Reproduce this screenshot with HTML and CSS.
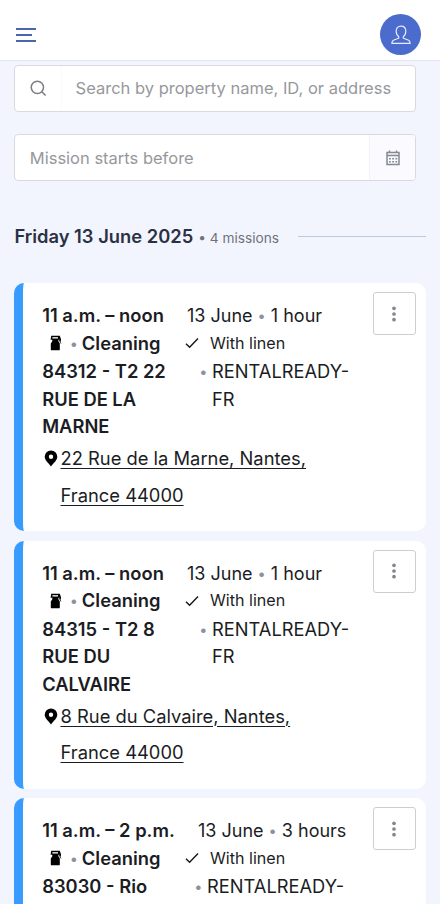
FILE: index.html
```html
<!DOCTYPE html>
<html lang="en">
<head>
<meta charset="utf-8">
<meta name="viewport" content="width=device-width, initial-scale=1">
<title>Missions</title>
<link rel="stylesheet" href="styles.css">
</head>
<body>
<svg class="sprite" aria-hidden="true">
  <symbol id="spray" viewBox="0 0 12 16">
    <path d="M1.200.8h8.600l1.200 3.400v3l-1.400-2.400H8.400v1.400l1.400 2.200v6c0 .6-.4.900-.9.900H1.700c-.5 0-.9-.3-.9-.9v-6l1.500-2.200V4.800H.6z"/>
    <path d="M2.400 2.200h5.600v1.300H2.400z" fill="#fff"/>
    <path d="M9 4.500l1.900 4" fill="none" stroke="#111" stroke-width=".8"/>
  </symbol>
  <symbol id="check" viewBox="0 0 14 12">
    <path d="M1 6.700l3.600 3.600L13 1.600" fill="none" stroke="#14161b" stroke-width="1.400"/>
  </symbol>
  <symbol id="pin" viewBox="0 0 14 17">
    <path fill-rule="evenodd" d="M7 .5A6.300 6.300 0 0 0 .7 6.800C.7 10.500 4.600 13 7 16.500c2.400-3.500 6.300-6 6.300-9.700A6.300 6.300 0 0 0 7 .5zM7 4.500a2.200 2.200 0 1 1 0 4.400 2.200 2.200 0 0 1 0-4.400z"/>
  </symbol>
  <symbol id="dots" viewBox="0 0 4 16">
    <circle cx="2" cy="2.300" r="1.850"/><circle cx="2" cy="8" r="1.850"/><circle cx="2" cy="13.700" r="1.850"/>
  </symbol>
</svg>

<header class="topbar">
  <svg class="menu" viewBox="0 0 20 14"><path d="M0 1h20M0 7h16M0 13h20"/></svg>
  <div class="avatar">
    <svg viewBox="0 0 20 20"><path d="M7.700 11.700C6 10.500 5.200 8.500 5.200 6.300c0-3.300 1.800-5.200 4.800-5.200s4.800 1.900 4.800 5.200c0 2.200-.8 4.200-2.500 5.400v1.500l5.300 2.100c1.100.5 1.500 1.300 1.500 3.100H.9c0-1.800.4-2.600 1.500-3.100l5.300-2.100z"/></svg>
  </div>
</header>

<main class="page">
  <div class="field search">
    <span class="search-icon"><svg viewBox="0 0 18 18"><circle cx="7.800" cy="7.800" r="6.500"/><path d="M12.500 12.500l4 4"/></svg></span>
    <span class="placeholder">Search by property name, ID, or address</span>
  </div>
  <div class="field date">
    <span class="placeholder">Mission starts before</span>
    <span class="date-icon"><svg viewBox="0 0 14 16"><path d="M1 2.500h12v12H1zM1 5.500h12M3.500.5v2M10.500.5v2"/><path class="grid-dots" d="M3 8.700h8.200M3 11.700h8.200"/></svg></span>
  </div>

  <div class="day">
    <h2>Friday 13 June 2025</h2>
    <span class="count">• 4 missions</span>
    <span class="rule"></span>
  </div>

  <article class="card">
    <div class="body">
      <div class="row"><b class="time">11 a.m. – noon</b><span class="when">13 June <i>•</i> 1 hour</span></div>
      <div class="row kind"><svg class="spray"><use href="#spray"/></svg><i>•</i><b class="type">Cleaning</b><svg class="check"><use href="#check"/></svg><span class="linen">With linen</span></div>
      <div class="row place"><b class="name">84312 - T2 22<br>RUE DE LA<br>MARNE</b><i>•</i><span class="owner">RENTALREADY-<br>FR</span></div>
      <div class="address"><svg class="pin"><use href="#pin"/></svg><a>22 Rue de la Marne, Nantes,<br>France 44000</a></div>
    </div>
    <div class="more"><svg><use href="#dots"/></svg></div>
  </article>

  <article class="card">
    <div class="body">
      <div class="row"><b class="time">11 a.m. – noon</b><span class="when">13 June <i>•</i> 1 hour</span></div>
      <div class="row kind"><svg class="spray"><use href="#spray"/></svg><i>•</i><b class="type">Cleaning</b><svg class="check"><use href="#check"/></svg><span class="linen">With linen</span></div>
      <div class="row place"><b class="name">84315 - T2 8<br>RUE DU<br>CALVAIRE</b><i>•</i><span class="owner">RENTALREADY-<br>FR</span></div>
      <div class="address"><svg class="pin"><use href="#pin"/></svg><a>8 Rue du Calvaire, Nantes,<br>France 44000</a></div>
    </div>
    <div class="more"><svg><use href="#dots"/></svg></div>
  </article>

  <article class="card cut">
    <div class="body">
      <div class="row"><b class="time long">11 a.m. – 2 p.m.</b><span class="when">13 June <i>•</i> 3 hours</span></div>
      <div class="row kind"><svg class="spray"><use href="#spray"/></svg><i>•</i><b class="type">Cleaning</b><svg class="check"><use href="#check"/></svg><span class="linen">With linen</span></div>
      <div class="row place narrow"><b class="name">83030 - Rio</b><i>•</i><span class="owner">RENTALREADY-</span></div>
    </div>
    <div class="more"><svg><use href="#dots"/></svg></div>
  </article>
</main>
</body>
</html>
```

FILE: styles.css
```css
* { box-sizing: border-box; }
body {
  margin: 0;
  height: 904px;
  overflow: hidden;
  background: #f2f5fe;
  color: #1b1d24;
  font-family: Inter, "Liberation Sans", sans-serif;
  font-size: 18px;
}
svg { display: block; flex: none; }
.sprite { display: none; }
i { font-style: normal; color: #8d919c; font-size: 14.5px; }
.when i { vertical-align: 1px; line-height: 1; }
b { font-weight: 600; font-size: 18.35px; }

.topbar {
  height: 61px;
  padding: 9px 19px 0 16px;
  display: flex;
  align-items: center;
  justify-content: space-between;
  background: #fff;
  border-bottom: 1px solid #e1e4ea;
}
.menu { width: 20px; height: 14px; stroke: #4a67ae; stroke-width: 2; }
.avatar {
  width: 41px;
  height: 41px;
  border-radius: 50%;
  background: #4b6bcd;
  display: grid;
  place-items: center;
}
.avatar svg { width: 20px; height: 20px; fill: none; stroke: #e8edff; stroke-width: 1.2; }

.page { height: 843px; padding: 4px 14px 0 14.4px; overflow: hidden; }
.field {
  width: 402px;
  height: 47px;
  display: flex;
  align-items: center;
  background: #fff;
  border: 1px solid #d9dae0;
  border-radius: 4px;
  overflow: hidden;
}
.placeholder { color: #96989c; font-size: 16.5px; white-space: nowrap; }
.search-icon { width: 47px; height: 45px; display: grid; place-items: center; border-right: 1px solid #fafafc; }
.search-icon svg { width: 17px; height: 17px; fill: none; stroke: #7c7e84; stroke-width: 1.6; }
.search .placeholder { margin: -2px 0 0 13.2px; }
.date { margin-top: 22px; padding-left: 14.4px; justify-content: space-between; }
.date .placeholder { font-size: 16.5px; }
.date-icon { width: 46px; height: 45px; display: grid; place-items: center; background: #fafaff; border-left: 1px solid #f2f2f7; }
.date-icon svg { width: 14px; height: 16px; fill: none; stroke: #858992; stroke-width: 1.5; }
.date-icon .grid-dots { stroke-dasharray: 1.8 1.4; stroke-width: 1.6; }

.day { height: 28px; margin-top: 41px; display: flex; align-items: center; }
.day h2 { margin: 0; font-size: 18.35px; font-weight: 600; color: #2b3143; white-space: nowrap; }
.count { margin: 3px 0 0 5px; font-size: 13.7px; color: #707278; white-space: nowrap; }
.rule { width: 128px; height: 1px; margin-left: auto; background: #bcc9df; }

.card {
  width: 411.6px;
  height: 248px;
  margin-top: 9.6px;
  padding: 9px 10px 0 18.8px;
  display: flex;
  justify-content: space-between;
  background: #fff;
  border-left: 9px solid #389bff;
  border-radius: 10px;
}
.day + .card { margin-top: 33px; }
.cut { height: 106px; border-bottom-left-radius: 0; border-bottom-right-radius: 0; }
.body { padding-top: 10px; white-space: nowrap; }
.row { display: flex; height: 27.5px; line-height: 27.5px; }
.time { width: 144.8px; }
.time.long { width: 155.8px; }
.kind { align-items: center; }
.spray { width: 12px; height: 16px; margin: 0 8px 0 8px; }
.kind i { margin-left: -.5px; }
.type { width: 103.6px; margin-left: 4px; }
.check { width: 14px; height: 12px; margin-right: 10.5px; }
.linen { font-size: 16.1px; }
.place { height: 83px; margin-top: 1px; }
.name { width: 157px; }
.narrow .name { width: 152px; }
.owner { margin-left: 4.7px; font-size: 18.3px; }
.address { display: flex; height: 73px; margin-top: -1px; line-height: 36.5px; font-size: 18.35px; }
.address a { text-decoration: underline; text-decoration-thickness: 1px; text-underline-offset: 3px; }
.pin { width: 14px; height: 17px; margin: 10px 2.500px 0 1.800px; }
.more {
  width: 43px;
  height: 43px;
  flex: none;
  display: grid;
  place-items: center;
  border: 1px solid #cdced2;
  border-radius: 3px;
}
.more svg { width: 4px; height: 16px; fill: #85878f; }
```
